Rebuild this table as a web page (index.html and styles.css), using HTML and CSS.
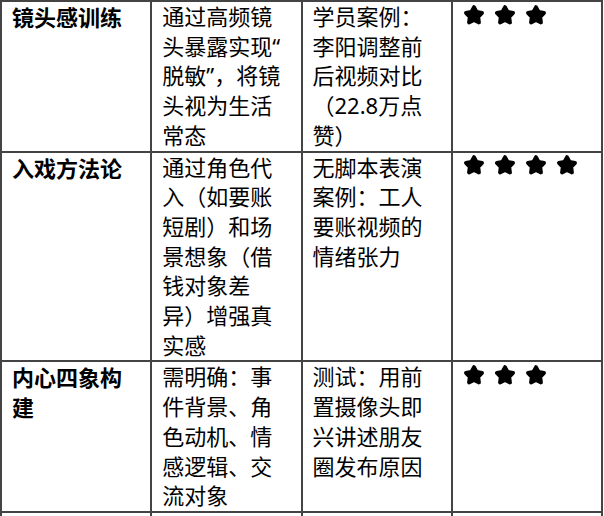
FILE: index.html
```html
<!DOCTYPE html>
<html lang="zh-CN">
<head>
<meta charset="utf-8">
<title>训练方法</title>
<link rel="stylesheet" href="styles.css">
</head>
<body>
<svg class="defs" width="0" height="0" aria-hidden="true">
  <defs>
    <symbol id="star" viewBox="0 0 24 24">
      <polygon points="12,4.1 14.65,8.96 20.08,9.97 16.28,13.99 17,19.48 12,17.1 7,19.48 7.72,13.99 3.92,9.97 9.35,8.96" fill="#000" stroke="#000" stroke-width="3.8" stroke-linejoin="round"/>
    </symbol>
  </defs>
</svg>
<div class="frame">
<table class="grid">
  <colgroup><col class="c"><col class="c"><col class="c"><col class="c"></colgroup>
  <tbody>
    <tr>
      <td class="name">镜头感训练</td>
      <td>通过高频镜头暴露实现“<wbr>脱敏”，将镜头视为生活常态</td>
      <td>学员案例：李阳调整前后视频对比（22.8万点赞）</td>
      <td><div class="stars"><svg class="star"><use href="#star"/></svg><svg class="star"><use href="#star"/></svg><svg class="star"><use href="#star"/></svg></div></td>
    </tr>
    <tr>
      <td class="name">入戏方法论</td>
      <td>通过角色代入（如要账短剧）和场景想象（借钱对象差异）增强真实感</td>
      <td>无脚本表演案例：工人要账视频的情绪张力</td>
      <td><div class="stars"><svg class="star"><use href="#star"/></svg><svg class="star"><use href="#star"/></svg><svg class="star"><use href="#star"/></svg><svg class="star"><use href="#star"/></svg></div></td>
    </tr>
    <tr>
      <td class="name">内心四象构建</td>
      <td>需明确：事件背景、角色动机、情感逻辑、交流对象</td>
      <td>测试：用前置摄像头即兴讲述朋友圈发布原因</td>
      <td><div class="stars"><svg class="star"><use href="#star"/></svg><svg class="star"><use href="#star"/></svg><svg class="star"><use href="#star"/></svg></div></td>
    </tr>
    <tr class="more">
      <td></td><td></td><td></td><td></td>
    </tr>
  </tbody>
</table>
</div>
</body>
</html>
```

FILE: styles.css
```css
html, body {
  margin: 0;
  padding: 0;
  background: #fff;
  overflow: hidden;
}
.defs {
  position: absolute;
  width: 0;
  height: 0;
}
.frame {
  width: 604px;
  height: 516px;
  overflow: hidden;
}
.grid {
  border-collapse: collapse;
  table-layout: fixed;
  width: 603px;
  font-family: "Noto Sans", "Noto Sans CJK SC", sans-serif;
  font-size: 22px;
  line-height: 29.7px;
  color: #000;
  text-spacing-trim: space-all;
}
.grid .c {
  width: 150px;
}
.grid td {
  border: 2px solid #444;
  padding: 0 10px;
  vertical-align: top;
}
.grid td.name {
  font-family: "Noto Sans CJK SC", sans-serif;
  font-weight: 700;
}
.grid tr.more td {
  height: 40px;
}
.stars {
  display: flex;
  gap: 7px;
  height: 29.7px;
  align-items: center;
  margin-top: -2px;
  margin-left: -1px;
}
.star {
  width: 24px;
  height: 24px;
  display: block;
}
```
